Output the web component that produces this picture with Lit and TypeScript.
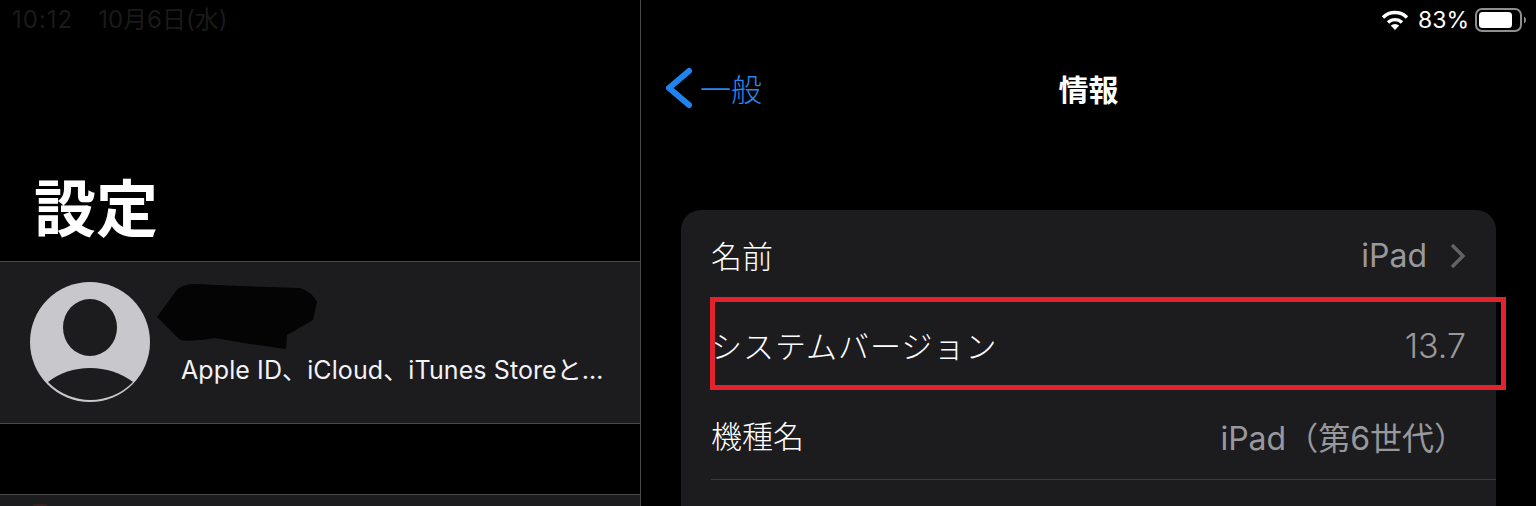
import { LitElement, html, css } from "lit";
import { customElement } from "lit/decorators.js";

@customElement("app-root")
export class AppRoot extends LitElement {
  static styles = css`
    :host {
      display: block;
      width: 1536px;
      height: 506px;
      overflow: hidden;
      background: #000;
      color: #fff;
      font-family: Inter, "Noto Sans CJK JP", sans-serif;
      position: relative;
    }
    .split {
      display: grid;
      grid-template-columns: 641px 1fr;
      height: 506px;
    }
    .left {
      border-right: 1px solid #48484a;
      position: relative;
      height: 506px;
      overflow: hidden;
    }
    .time {
      height: 40px;
      padding-left: 12px;
      font-size: 24px;
      line-height: 40px;
      letter-spacing: 1px;
      color: #1a1a1a;
      white-space: nowrap;
    }
    .time span {
      margin-left: 25px;
      letter-spacing: 0;
    }
    .big {
      margin: 125px 0 0 34px;
      height: 96px;
      font-size: 62px;
      line-height: 80px;
      font-weight: 700;
      font-family: "Noto Sans CJK JP", sans-serif;
    }
    .account {
      background: #1c1c1e;
      border-top: 1px solid #48484a;
      border-bottom: 1px solid #48484a;
      display: flex;
      align-items: flex-start;
      padding: 20px 0 0 30px;
      box-sizing: content-box;
      height: 141px;
      gap: 31px;
    }
    .avatar {
      width: 120px;
      height: 120px;
      flex: none;
      display: block;
    }
    .who {
      display: flex;
      flex-direction: column;
      justify-content: flex-end;
      height: 120px;
      font-size: 25px;
      line-height: 28px;
      letter-spacing: 0.1px;
      color: #f2f2f7;
      white-space: nowrap;
      padding-bottom: 18px;
      box-sizing: border-box;
    }
    .scribble {
      position: absolute;
      left: 150px;
      top: 280px;
      width: 175px;
      height: 75px;
    }
    .group {
      margin-top: 70px;
      height: 40px;
      background: #1c1c1e;
      border-top: 1px solid #48484a;
      padding: 9px 0 0 32px;
      box-sizing: border-box;
    }
    .peek {
      width: 16px;
      height: 6px;
      background: #33201f;
      border-radius: 3px 3px 0 0;
    }
    .right {
      display: flex;
      flex-direction: column;
      min-width: 0;
    }
    .status {
      height: 40px;
      flex: none;
      display: flex;
      align-items: center;
      justify-content: flex-end;
      padding-right: 9px;
      font-size: 23px;
      color: #fff;
    }
    .wifi {
      width: 28px;
      height: 22px;
      margin-right: 9px;
      flex: none;
    }
    .battery {
      width: 52px;
      height: 24px;
      margin-left: 6px;
      flex: none;
    }
    .nav {
      height: 100px;
      flex: none;
      position: relative;
      display: flex;
      align-items: center;
      justify-content: center;
      padding-bottom: 4px;
      box-sizing: border-box;
    }
    .back {
      position: absolute;
      left: 24px;
      top: 26px;
      display: flex;
      align-items: center;
      gap: 7px;
      color: #2a86ec;
      font-size: 31px;
      line-height: 44px;
      font-family: "Noto Sans CJK JP", sans-serif;
      font-weight: 300;
    }
    .chev {
      width: 28px;
      height: 44px;
      display: block;
    }
    .title {
      font-size: 30px;
      font-weight: 700;
      font-family: "Noto Sans CJK JP", sans-serif;
    }
    .card {
      margin: 70px 40px 0 40px;
      width: 815px;
      box-sizing: border-box;
      background: #1c1c1e;
      border-radius: 20px 20px 0 0;
      padding-left: 30px;
      flex: 1;
    }
    .row {
      height: 90px;
      box-sizing: border-box;
      display: flex;
      align-items: center;
      justify-content: space-between;
      padding-right: 30px;
      font-size: 31px;
      font-weight: 300;
      white-space: nowrap;
      border-bottom: 1px solid #3a3a3c;
    }
    .sys {
      letter-spacing: 1px;
    }
    .row .val {
      color: #98989d;
      display: flex;
      align-items: center;
      font-size: 32px;
      font-weight: 400;
      padding-top: 2px;
    }
    .row .num {
      font-size: 34px;
      font-weight: 300;
    }
    .disc {
      width: 16px;
      height: 26px;
      margin-left: 23px;
      display: block;
    }
    .mark {
      position: absolute;
      left: 710px;
      top: 297px;
      width: 796px;
      height: 93px;
      box-sizing: border-box;
      border: 5px solid #e2232e;
    }
  `;

  render() {
    return html`
      <div class="split">
        <section class="left">
          <div class="time">10:12<span>10月6日(水)</span></div>
          <div class="big">設定</div>
          <div class="account">
            <svg class="avatar" viewBox="0 0 120 120">
              <circle cx="60" cy="60" r="60" fill="#c7c7cc" />
              <ellipse cx="60" cy="45.5" rx="27" ry="28.5" fill="#1c1c1e" />
              <path
                d="M18 100 Q36 86 60 86 Q84 86 103 100 A59.2 59.2 0 0 1 18 100 Z"
                fill="#1c1c1e"
              />
            </svg>
            <div class="who">Apple ID、iCloud、iTunes Storeと…</div>
          </div>
          <svg class="scribble" viewBox="150 280 175 75">
            <path
              d="M157 317 L176 291 Q182 284 194 284 L240 286 L300 288 Q312 292 317 302 L313 320 L287 335 L286 349 L250 344 L215 338 Q190 342 180 340 Z"
              fill="#040404"
            />
          </svg>
          <div class="group"><div class="peek"></div></div>
        </section>
        <section class="right">
          <div class="status">
            <svg class="wifi" viewBox="0 0 28 22">
              <path d="M2 8.5 A17 17 0 0 1 26 8.5" fill="none" stroke="#fff" stroke-width="3.4" />
              <path d="M7 13.5 A10 10 0 0 1 21 13.5" fill="none" stroke="#fff" stroke-width="3.4" />
              <path d="M14 21 L9.8 16.6 A6 6 0 0 1 18.2 16.6 Z" fill="#fff" />
            </svg>
            <span>83%</span>
            <svg class="battery" viewBox="0 0 52 24">
              <rect x="1" y="1" width="45" height="22" rx="6" fill="none" stroke="#8e8e93" stroke-width="2" />
              <rect x="4" y="4" width="33" height="16" rx="3.5" fill="#fff" />
              <path d="M49 8.5 A4 4 0 0 1 49 15.5 Z" fill="#8e8e93" />
            </svg>
          </div>
          <div class="nav">
            <div class="back">
              <svg class="chev" viewBox="0 0 28 44">
                <path d="M24 5 L4 22 L24 39" fill="none" stroke="#1f84f0" stroke-width="6" stroke-linecap="round" stroke-linejoin="round" />
              </svg>
              <span>一般</span>
            </div>
            <div class="title">情報</div>
          </div>
          <div class="card">
            <div class="row">
              <span>名前</span>
              <span class="val">iPad<svg class="disc" viewBox="0 0 16 26"><path d="M2 2 L13 13 L2 24" fill="none" stroke="#636366" stroke-width="3.4" /></svg></span>
            </div>
            <div class="row">
              <span class="sys">システムバージョン</span>
              <span class="val num">13.7</span>
            </div>
            <div class="row">
              <span>機種名</span>
              <span class="val">iPad（第6世代）</span>
            </div>
          </div>
        </section>
      </div>
      <div class="mark"></div>
    `;
  }
}
